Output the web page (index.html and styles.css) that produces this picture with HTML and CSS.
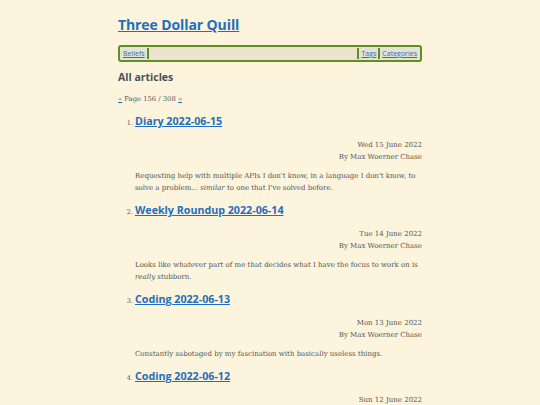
FILE: index.html
```html
<!DOCTYPE html>
<html>
<head>
<meta charset="utf-8">
<link rel="stylesheet" href="styles.css">
</head>
<body>
<div class="page">
  <h1 class="site-title"><a href="#">Three Dollar Quill</a></h1>
  <nav class="nav">
    <a class="nav-link left" href="#">Beliefs</a>
    <span class="nav-fill"></span>
    <a class="nav-link right" href="#">Tags</a>
    <a class="nav-link right" href="#">Categories</a>
  </nav>
  <h2 class="section-title">All articles</h2>
  <p class="pager"><a href="#">«</a> Page 156 / 308 <a href="#">»</a></p>
  <ol class="articles">
    <li class="article">
      <h3 class="article-title"><a href="#">Diary 2022-06-15</a></h3>
      <div class="meta"><div>Wed 15 June 2022</div><div>By Max Woerner Chase</div></div>
      <p class="excerpt">Requesting help with multiple APIs I don't know, in a language I don't know, to solve a problem... <em>similar</em> to one that I've solved before.</p>
    </li>
    <li class="article">
      <h3 class="article-title"><a href="#">Weekly Roundup 2022-06-14</a></h3>
      <div class="meta"><div>Tue 14 June 2022</div><div>By Max Woerner Chase</div></div>
      <p class="excerpt">Looks like whatever part of me that decides what I have the focus to work on is <em>really</em> stubborn.</p>
    </li>
    <li class="article">
      <h3 class="article-title"><a href="#">Coding 2022-06-13</a></h3>
      <div class="meta"><div>Mon 13 June 2022</div><div>By Max Woerner Chase</div></div>
      <p class="excerpt">Constantly sabotaged by my fascination with basically useless things.</p>
    </li>
    <li class="article">
      <h3 class="article-title"><a href="#">Coding 2022-06-12</a></h3>
      <div class="meta"><div>Sun 12 June 2022</div><div>By Max Woerner Chase</div></div>
    </li>
  </ol>
</div>
</body>
</html>
```
FILE: styles.css
```css
html, body {
  margin: 0;
  padding: 0;
  background: #fcf4dc;
}
body {
  font-family: "DejaVu Serif", serif;
  color: #555555;
}
.page {
  width: 304px;
  margin: 0 auto;
  padding-top: 14px;
}
a {
  color: #1f6fbf;
}
.site-title {
  margin: 0;
  font-family: "Open Sans", sans-serif;
  font-weight: 700;
  font-size: 14px;
  line-height: 22px;
  letter-spacing: -0.1px;
}
.nav {
  margin-top: 9px;
  display: flex;
  align-items: stretch;
  height: 11px;
  padding: 1px;
  border: 2px solid #5f8f22;
  border-radius: 3px;
  background: #ebe3cf;
  font-family: "Open Sans", sans-serif;
  font-size: 7px;
  line-height: 11px;
}
.nav-link {
  color: #3a6fb0;
  padding: 0 2px;
  background: #e2e3d6;
}
.nav-link.left {
  border-right: 2px solid #5f8f22;
}
.nav-link.right {
  border-left: 2px solid #5f8f22;
}
.nav-fill {
  flex: 1;
}
.section-title {
  margin: 7px 0 0;
  font-family: "Open Sans", sans-serif;
  font-weight: 700;
  font-size: 10.5px;
  line-height: 16px;
  color: #48525c;
}
.pager {
  margin: 8px 0 0;
  font-size: 6.8px;
  line-height: 12px;
}
.articles {
  margin: 8px 0 0;
  padding-left: 17px;
  font-size: 6.5px;
}
.article-title {
  margin: 0;
  font-family: "Open Sans", sans-serif;
  font-weight: 700;
  font-size: 10.7px;
  line-height: 16px;
}
.meta {
  margin-top: 10px;
  text-align: right;
  font-size: 7px;
  line-height: 12px;
}
.excerpt {
  margin: 7px 0 8px;
  font-size: 7px;
  line-height: 12px;
}
```
